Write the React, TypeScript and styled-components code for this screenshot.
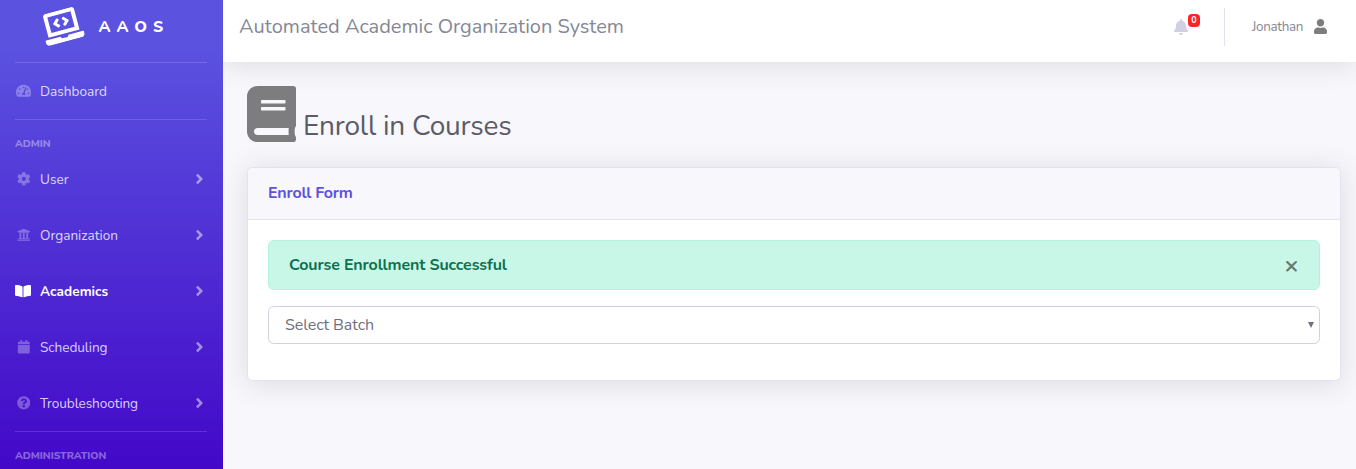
import React from "react";
import styled, { createGlobalStyle, css } from "styled-components";
import {
  FaAngleRight,
  FaBell,
  FaBook,
  FaBookOpen,
  FaCalendar,
  FaCog,
  FaLaptopCode,
  FaQuestionCircle,
  FaTachometerAlt,
  FaUniversity,
  FaUser,
} from "react-icons/fa";

const GlobalStyle = createGlobalStyle`
  *, *::before, *::after { box-sizing: border-box; }
  html, body { margin: 0; height: 100%; overflow: hidden; }
  body {
    font-family: Nunito, Lato, "Open Sans", sans-serif;
    font-size: 16px;
    line-height: 1.5;
    color: #6e707e;
    background: #f8f7fc;
  }
  #root { height: 100%; }
  svg { display: block; flex: none; }
`;

const Page = styled.div`
  display: flex;
  height: 469px;
  overflow: hidden;
`;

const Sidebar = styled.nav`
  flex: 0 0 223px;
  padding: 0 16px 0 15px;
  background: linear-gradient(180deg, #5b52e0 10%, #4308c8 100%);
  overflow: hidden;
`;

const Brand = styled.a`
  display: flex;
  align-items: center;
  height: 62px;
  padding: 0 0 10px 27px;
  color: #fff;
`;

const BrandIcon = styled(FaLaptopCode)`
  width: 40px;
  height: 32px;
  transform: rotate(-15deg);
`;

const BrandText = styled.span`
  margin-left: 16.5px;
  padding-top: 2px;
  font-size: 16px;
  font-weight: 800;
  letter-spacing: 6px;
`;

const Divider = styled.hr`
  height: 1px;
  margin: 0;
  border: 0;
  background: rgba(255, 255, 255, 0.15);
`;

const Heading = styled.div<{ $spacing: number }>`
  height: 31px;
  padding-top: 16px;
  font-size: 10.4px;
  line-height: 15px;
  font-weight: 800;
  letter-spacing: ${(p) => p.$spacing}px;
  color: rgba(255, 255, 255, 0.4);
`;

const NavItem = styled.a<{ $active?: boolean }>`
  display: flex;
  align-items: center;
  height: 56px;
  color: rgba(255, 255, 255, 0.8);
  ${(p) =>
    p.$active &&
    css`
      color: #fff;
      font-weight: 700;
    `}
`;

const NavIcon = styled.span<{ $active?: boolean; $size: number }>`
  display: flex;
  justify-content: center;
  width: 17px;
  margin-right: 8px;
  color: ${(p) => (p.$active ? "#fff" : "rgba(255, 255, 255, 0.3)")};
  svg {
    width: ${(p) => p.$size}px;
    height: ${(p) => (p.$active ? 14.2 : 13.6)}px;
    margin-right: ${(p) => (p.$active ? 1 : 0)}px;
  }
`;

const NavLabel = styled.span<{ $spacing: number }>`
  flex: 1;
  padding-top: 2px;
  font-size: 13.6px;
  line-height: 20px;
  letter-spacing: ${(p) => p.$spacing}px;
`;

const Arrow = styled(FaAngleRight)`
  width: 9px;
  height: 16px;
  margin-right: 3.5px;
  color: rgba(255, 255, 255, 0.5);
`;

const Content = styled.main`
  flex: 1;
  min-width: 0;
  overflow: hidden;
`;

const Topbar = styled.header`
  display: flex;
  height: 62px;
  padding: 0 28px 0 16px;
  background: #fff;
  box-shadow: 0 2.4px 28px rgba(58, 59, 69, 0.15);
`;

const AppTitle = styled.div`
  flex: 1;
  padding-top: 12px;
  font-size: 20px;
  line-height: 30px;
  color: #858796;
`;

const Alerts = styled.div`
  position: relative;
  width: 15px;
  margin: 19px 35px 0 0;
  color: #d1d0e2;
  svg {
    width: 14px;
    height: 16px;
  }
`;

const Badge = styled.span`
  position: absolute;
  left: 14px;
  top: -5px;
  width: 12px;
  height: 13px;
  border-radius: 4px;
  background: #fa2429;
  color: #fff;
  font-size: 9px;
  font-weight: 700;
  line-height: 13px;
  text-align: center;
`;

const Separator = styled.div`
  width: 1px;
  height: 38px;
  margin: 8px 27px 0 0;
  background: #e2e1ee;
`;

const UserMenu = styled.div`
  display: flex;
  gap: 10px;
  padding-top: 17px;
  height: 40px;
  font-size: 13.4px;
  line-height: 20px;
  color: #858796;
  svg {
    width: 13px;
    height: 15px;
    margin: 2px 1px 0 0;
    color: #7d7d7f;
  }
`;

const UserName = styled.span`
  width: 52px;
  letter-spacing: -0.3px;
`;

const Main = styled.section`
  padding: 24px 15px 0 24px;
`;

const PageTitle = styled.h1`
  display: flex;
  height: 81px;
  margin: 0;
  font-size: 28px;
  line-height: 34px;
  font-weight: 400;
  color: #5a5c69;
  svg {
    width: 49px;
    height: 56px;
    margin-right: 7px;
    color: #7d7d7f;
  }
`;

const PageTitleText = styled.span`
  padding-top: 23px;
  letter-spacing: -0.2px;
`;

const Card = styled.div`
  height: 214px;
  border: 1px solid #e3e2ef;
  border-radius: 5.6px;
  background: #fff;
  box-shadow: 0 2.4px 28px rgba(58, 59, 69, 0.15);
`;

const CardHeader = styled.div`
  height: 52px;
  padding: 13px 20px;
  border-bottom: 1px solid #e3e2ef;
  border-radius: 5px 5px 0 0;
  background: #f8f7fc;
  color: #5b52e0;
  font-weight: 700;
  line-height: 24px;
  letter-spacing: -0.22px;
`;

const CardBody = styled.div`
  padding: 20px;
`;

const Alert = styled.div`
  display: flex;
  justify-content: space-between;
  height: 50px;
  margin-bottom: 16px;
  padding: 12px 20px;
  border: 1px solid #b3f3dc;
  border-radius: 5.6px;
  background: #c9f7e7;
  color: #0c7150;
  font-weight: 700;
  line-height: 24px;
`;

const AlertText = styled.span`
  letter-spacing: -0.13px;
`;

const Close = styled.span`
  width: 15px;
  text-align: center;
  font-size: 24px;
  line-height: 25px;
  color: #65796f;
`;

const Select = styled.div`
  display: flex;
  align-items: center;
  justify-content: space-between;
  height: 38px;
  padding: 0 5px 0 16px;
  border: 1px solid #d1d0e2;
  border-radius: 5.6px;
  background: #fff;
  color: #6e707e;
  letter-spacing: -0.08px;
`;

const Caret = styled.svg`
  width: 6px;
  height: 6px;
`;

type Item = {
  label: string;
  icon: React.ComponentType;
  size: number;
  spacing: number;
  active?: boolean;
};

const adminItems: Item[] = [
  { label: "User", icon: FaCog, size: 13.6, spacing: 0 },
  { label: "Organization", icon: FaUniversity, size: 13.6, spacing: 0 },
  { label: "Academics", icon: FaBookOpen, size: 16, spacing: 0.05, active: true },
  { label: "Scheduling", icon: FaCalendar, size: 13.6, spacing: -0.05 },
  { label: "Troubleshooting", icon: FaQuestionCircle, size: 13.6, spacing: -0.08 },
];

function NavEntry({ item, arrow = true }: { item: Item; arrow?: boolean }) {
  const Icon = item.icon;
  return (
    <NavItem $active={item.active}>
      <NavIcon $active={item.active} $size={item.size}>
        <Icon />
      </NavIcon>
      <NavLabel $spacing={item.spacing}>{item.label}</NavLabel>
      {arrow && <Arrow />}
    </NavItem>
  );
}

export default function App() {
  return (
    <>
      <GlobalStyle />
      <Page>
        <Sidebar>
          <Brand>
            <BrandIcon />
            <BrandText>AAOS</BrandText>
          </Brand>
          <Divider />
          <NavEntry
            item={{ label: "Dashboard", icon: FaTachometerAlt, size: 15.3, spacing: 0 }}
            arrow={false}
          />
          <Divider />
          <Heading $spacing={-0.1}>ADMIN</Heading>
          {adminItems.map((item) => (
            <NavEntry key={item.label} item={item} />
          ))}
          <Divider />
          <Heading $spacing={-0.05}>ADMINISTRATION</Heading>
        </Sidebar>
        <Content>
          <Topbar>
            <AppTitle>Automated Academic Organization System</AppTitle>
            <Alerts>
              <FaBell />
              <Badge>0</Badge>
            </Alerts>
            <Separator />
            <UserMenu>
              <UserName>Jonathan</UserName>
              <FaUser />
            </UserMenu>
          </Topbar>
          <Main>
            <PageTitle>
              <FaBook />
              <PageTitleText>Enroll in Courses</PageTitleText>
            </PageTitle>
            <Card>
              <CardHeader>Enroll Form</CardHeader>
              <CardBody>
                <Alert>
                  <AlertText>Course Enrollment Successful</AlertText>
                  <Close>×</Close>
                </Alert>
                <Select>
                  <span>Select Batch</span>
                  <Caret viewBox="0 0 6 6">
                    <path d="M0 0h6L3 6z" fill="currentColor" />
                  </Caret>
                </Select>
              </CardBody>
            </Card>
          </Main>
        </Content>
      </Page>
    </>
  );
}
